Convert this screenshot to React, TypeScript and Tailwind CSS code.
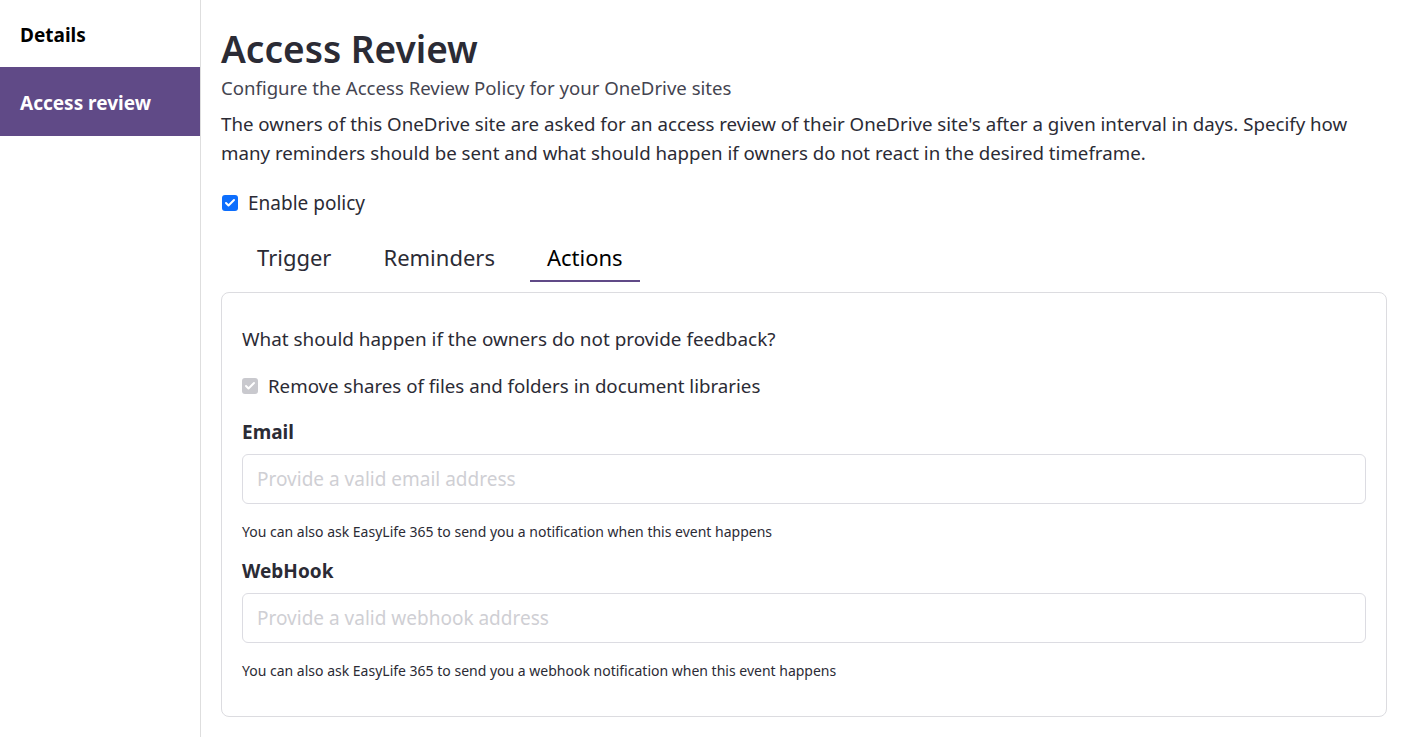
import { Check } from 'lucide-react';

const font = { fontFamily: '"Noto Sans", "Open Sans", sans-serif' };

function Field({ label, placeholder, help }: { label: string; placeholder: string; help: string }) {
  return (
    <div className="flex flex-col">
      <div className="text-[19px] font-bold text-[#2b2b35] leading-[26px]">{label}</div>
      <input
        placeholder={placeholder}
        className="mt-[9px] h-[50px] w-full rounded-[6px] border border-[#dcdce2] px-[14px] text-[19px] text-[#333] placeholder:text-[#cfcfd4] outline-none"
      />
      <div className="mt-[18px] text-[14px] text-[#2b2b35] leading-[20px]">{help}</div>
    </div>
  );
}

export default function App() {
  const tabs = ['Trigger', 'Reminders', 'Actions'];
  return (
    <div className="flex min-h-[737px] bg-white" style={font}>
      <aside className="w-[201px] shrink-0 border-r border-[#dedede]">
        <div className="h-[67px] flex items-center pt-[3px] px-[20px] text-[19px] font-bold text-black">Details</div>
        <div className="h-[69px] flex items-center pt-[3px] px-[20px] text-[19px] font-bold text-white bg-[#604a87]">Access review</div>
      </aside>

      <main className="flex-1 pl-[20px] pr-[18px] pt-[24px]">
        <h1 className="text-[37px] font-semibold text-[#2b2b35] leading-[50px]">Access Review</h1>
        <p className="text-[18.6px] text-[#444450] leading-[26px] mt-[1px]">Configure the Access Review Policy for your OneDrive sites</p>
        <p className="text-[18.7px] text-[#2b2b35] leading-[29px] mt-[8px] pr-[20px]">
          The owners of this OneDrive site are asked for an access review of their OneDrive site's after a given interval in days. Specify how many reminders should be sent and what should happen if owners do not react in the desired timeframe.
        </p>

        <label className="flex items-center gap-[10px] mt-[22px] pl-[1px] text-[19px] text-[#2b2b35] leading-[28px]">
          <span className="w-[16px] h-[16px] rounded-[3px] bg-[#0d6efd] flex items-center justify-center">
            <Check className="w-[12px] h-[12px] text-white" strokeWidth={4} />
          </span>
          Enable policy
        </label>

        <nav className="flex mt-[15px] pl-[19px]">
          {tabs.map((t, i) => (
            <div
              key={t}
              className={`px-[17px] pt-[10px] pb-[8px] text-[22px] leading-[30px] ${
                i === 2 ? 'text-black border-b-2 border-[#604a87]' : 'text-[#2b2b35] border-b-2 border-transparent'
              } ${i === 0 ? 'pl-[17px] pr-[35px]' : i === 1 ? 'pr-[35px]' : ''}`}
            >
              {t}
            </div>
          ))}
        </nav>

        <section className="mt-[10px] rounded-[8px] border border-[#dcdce0] pl-[20px] pr-[20px] pt-[32px] pb-[35px]">
          <p className="text-[18.9px] text-[#2b2b35] leading-[28px]">What should happen if the owners do not provide feedback?</p>
          <label className="flex items-center gap-[10px] mt-[19px] text-[18.7px] text-[#2b2b35] leading-[28px]">
            <span className="w-[16px] h-[16px] rounded-[3px] bg-[#c9c9ce] flex items-center justify-center">
              <Check className="w-[12px] h-[12px] text-white" strokeWidth={4} />
            </span>
            Remove shares of files and folders in document libraries
          </label>
          <div className="mt-[19px] flex flex-col gap-[16px]">
            <Field label="Email" placeholder="Provide a valid email address" help="You can also ask EasyLife 365 to send you a notification when this event happens" />
            <Field label="WebHook" placeholder="Provide a valid webhook address" help="You can also ask EasyLife 365 to send you a webhook notification when this event happens" />
          </div>
        </section>
      </main>
    </div>
  );
}
